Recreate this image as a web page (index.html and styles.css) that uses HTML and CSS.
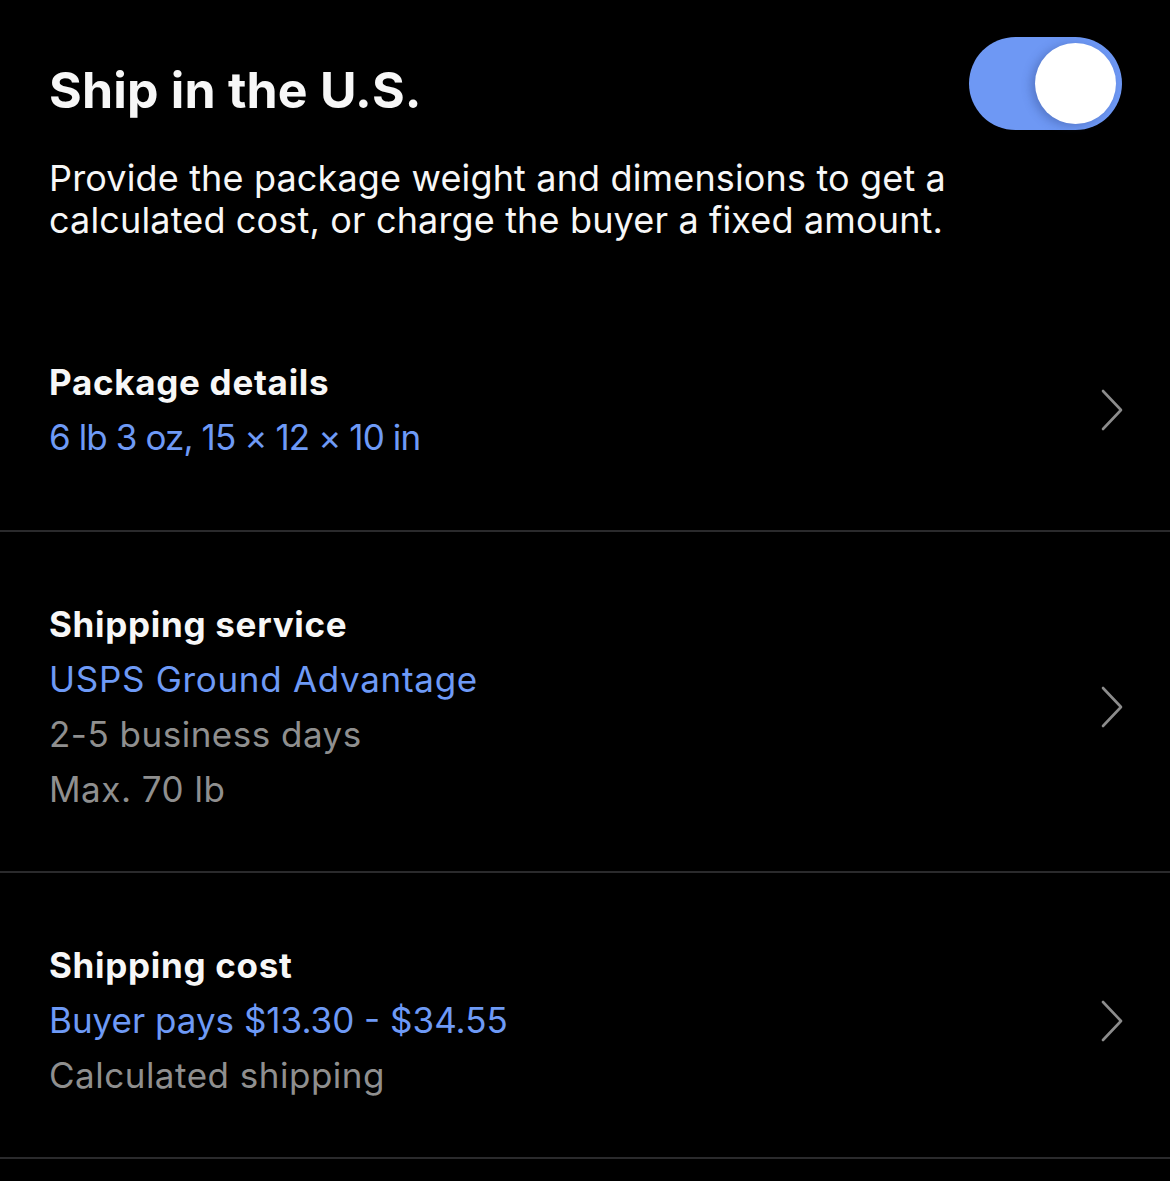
FILE: index.html
```html
<!DOCTYPE html>
<html lang="en">
<head>
  <meta charset="UTF-8">
  <title>Ship in the U.S.</title>
  <link rel="stylesheet" href="styles.css">
</head>
<body>
  <div class="header">
    <h1 class="title">Ship in the U.S.</h1>
    <div class="toggle on"><div class="knob"></div></div>
  </div>
  <p class="intro">Provide the package weight and dimensions to get a calculated cost, or charge the buyer a fixed amount.</p>

  <div class="list">
    <div class="row">
      <div class="rowText">
        <div class="label">Package details</div>
        <div class="value tight">6 lb 3 oz, 15 × 12 × 10 in</div>
      </div>
      <svg class="chev" width="24" height="42" viewBox="0 0 24 42"><polyline points="3,2 21,21 3,40" fill="none" stroke="#8c8c8c" stroke-width="2.6" stroke-linecap="round" stroke-linejoin="round"/></svg>
    </div>
    <div class="row">
      <div class="rowText">
        <div class="label">Shipping service</div>
        <div class="value">USPS Ground Advantage</div>
        <div class="note">2-5 business days</div>
        <div class="note">Max. 70 lb</div>
      </div>
      <svg class="chev" width="24" height="42" viewBox="0 0 24 42"><polyline points="3,2 21,21 3,40" fill="none" stroke="#8c8c8c" stroke-width="2.6" stroke-linecap="round" stroke-linejoin="round"/></svg>
    </div>
    <div class="row">
      <div class="rowText">
        <div class="label">Shipping cost</div>
        <div class="value price">Buyer pays $13.30 - $34.55</div>
        <div class="note">Calculated shipping</div>
      </div>
      <svg class="chev" width="24" height="42" viewBox="0 0 24 42"><polyline points="3,2 21,21 3,40" fill="none" stroke="#8c8c8c" stroke-width="2.6" stroke-linecap="round" stroke-linejoin="round"/></svg>
    </div>
  </div>
</body>
</html>
```

FILE: styles.css
```css
body {
  margin: 0;
  background-color: #000;
  color: #f7f7f7;
  font-family: Inter, "Noto Sans", sans-serif;
  overflow: hidden;
}
.header {
  display: flex;
  justify-content: space-between;
  align-items: flex-start;
  padding: 37px 48px 0 49px;
}
.title {
  margin: 23px 0 0;
  font-size: 50px;
  font-weight: 700;
  line-height: 60px;
  letter-spacing: 0.2px;
}
.toggle {
  width: 153px;
  height: 93px;
  border-radius: 47px;
  background-color: #6e98f4;
  display: flex;
  align-items: center;
  justify-content: flex-end;
  padding: 0 6px;
  box-sizing: border-box;
}
.knob {
  width: 81px;
  height: 81px;
  border-radius: 50%;
  background-color: #fff;
  box-shadow: -4px 2px 10px rgba(40, 60, 120, 0.35);
}
.intro {
  margin: 27px 0 0 49px;
  max-width: 960px;
  font-size: 36px;
  line-height: 42px;
  letter-spacing: 0.15px;
}
.list {
  margin-top: 49px;
}
.row {
  display: flex;
  align-items: center;
  justify-content: space-between;
  padding: 65px 48px 54px 49px;
  border-bottom: 2px solid #2a2a2c;
}
.row:first-child {
  padding-bottom: 65px;
}
.label {
  font-size: 35px;
  font-weight: 700;
  line-height: 55px;
  letter-spacing: 0.7px;
}
.value {
  font-size: 35px;
  line-height: 55px;
  color: #6e9af6;
  letter-spacing: 0.7px;
}
.value.tight {
  letter-spacing: -0.9px;
}
.value.price {
  letter-spacing: 0;
}
.note {
  font-size: 35px;
  line-height: 55px;
  color: #8f8f8f;
  letter-spacing: 0.5px;
}
.chev {
  flex: none;
  margin-right: -2px;
}
```
